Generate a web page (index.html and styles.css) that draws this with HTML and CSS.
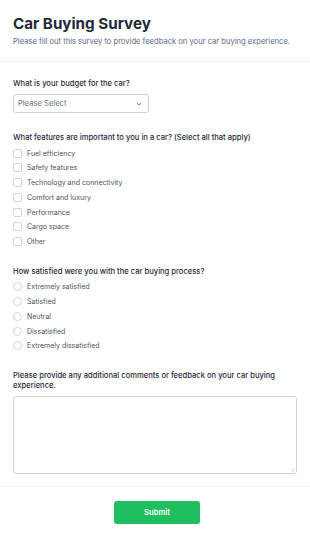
FILE: index.html
```html
<!DOCTYPE html>
<html lang="en">
<head>
    <meta charset="UTF-8">
    <meta name="viewport" content="width=device-width, initial-scale=1.0">
    <title>Car Buying Survey</title>
    <link rel="stylesheet" href="styles.css">
</head>
<body>

    <header class="top">
        <h1>Car Buying Survey</h1>
        <p>Please fill out this survey to provide feedback on your car buying experience.</p>
    </header>

    <form class="survey">

        <!-- Orcamento -->
        <div class="field">
            <label class="question">What is your budget for the car?</label>
            <div class="select-box">
                <span>Please Select</span>
                <svg width="6" height="4" viewBox="0 0 6 4"><path d="M0.8 0.8 L3 3 L5.2 0.8" fill="none" stroke="#6b7280" stroke-width="0.9"/></svg>
            </div>
        </div>

        <!-- Recursos -->
        <div class="field">
            <label class="question">What features are important to you in a car? (Select all that apply)</label>
            <div class="options">
                <label class="opt"><span class="box"></span>Fuel efficiency</label>
                <label class="opt"><span class="box"></span>Safety features</label>
                <label class="opt"><span class="box"></span>Technology and connectivity</label>
                <label class="opt"><span class="box"></span>Comfort and luxury</label>
                <label class="opt"><span class="box"></span>Performance</label>
                <label class="opt"><span class="box"></span>Cargo space</label>
                <label class="opt"><span class="box"></span>Other</label>
            </div>
        </div>

        <!-- Satisfacao -->
        <div class="field">
            <label class="question">How satisfied were you with the car buying process?</label>
            <div class="options">
                <label class="opt"><span class="box round"></span>Extremely satisfied</label>
                <label class="opt"><span class="box round"></span>Satisfied</label>
                <label class="opt"><span class="box round"></span>Neutral</label>
                <label class="opt"><span class="box round"></span>Dissatisfied</label>
                <label class="opt"><span class="box round"></span>Extremely dissatisfied</label>
            </div>
        </div>

        <!-- Comentarios -->
        <div class="field">
            <label class="question">Please provide any additional comments or feedback on your car buying experience.</label>
            <div class="text-area">
                <svg class="grip" width="5" height="5" viewBox="0 0 5 5"><path d="M4.5 1 L1 4.5 M4.5 3 L3 4.5" stroke="#b8bcc4" stroke-width="0.6"/></svg>
            </div>
        </div>

    </form>

    <footer class="bottom">
        <button type="button">Submit</button>
    </footer>

</body>
</html>
```

FILE: styles.css
```css
body {
    font-family: Inter, "Noto Sans", sans-serif;
    margin: 0;
    padding: 0;
    background: #fff;
    color: #374151;
}
.top {
    padding: 13px 13px 15px;
    border-bottom: 1px solid #f1f2f4;
}
.top h1 {
    margin: 0;
    font-size: 15.2px;
    font-weight: 700;
    color: #1f2937;
    line-height: 22px;
}
.top p {
    margin: 2px 0 0;
    font-size: 7.6px;
    color: #5b6b86;
}
.survey {
    padding: 17px 13px 12px;
}
.field {
    margin-bottom: 20px;
}
.field:last-child {
    margin-bottom: 0;
}
.question {
    display: block;
    font-size: 7.6px;
    font-weight: 500;
    color: #1f2937;
    line-height: 10px;
    margin-bottom: 5px;
}
.select-box {
    width: 136px;
    height: 19px;
    box-sizing: border-box;
    border: 1px solid #d1d5db;
    border-radius: 3px;
    padding: 0 6px 0 4px;
    display: flex;
    justify-content: space-between;
    align-items: center;
    font-size: 7.6px;
    color: #6b7280;
}
.options {
    display: flex;
    flex-direction: column;
    gap: 4.8px;
}
.opt {
    display: flex;
    align-items: center;
    gap: 5px;
    font-size: 7px;
    color: #4b5563;
    height: 10px;
}
.box {
    width: 9px;
    height: 9px;
    box-sizing: border-box;
    border: 1px solid #d1d5db;
    border-radius: 2px;
}
.box.round {
    border-radius: 50%;
}
.text-area {
    height: 78px;
    box-sizing: border-box;
    border: 1px solid #d1d5db;
    border-radius: 3px;
    position: relative;
}
.grip {
    position: absolute;
    right: 1px;
    bottom: 1px;
}
.bottom {
    border-top: 1px solid #f1f2f4;
    padding: 14px 0 14px 4px;
    display: flex;
    justify-content: center;
}
.bottom button {
    width: 86px;
    height: 23px;
    background: #1fbf5f;
    color: white;
    border: none;
    border-radius: 3px;
    font-family: Inter, sans-serif;
    font-size: 7.6px;
    font-weight: 600;
}
```
